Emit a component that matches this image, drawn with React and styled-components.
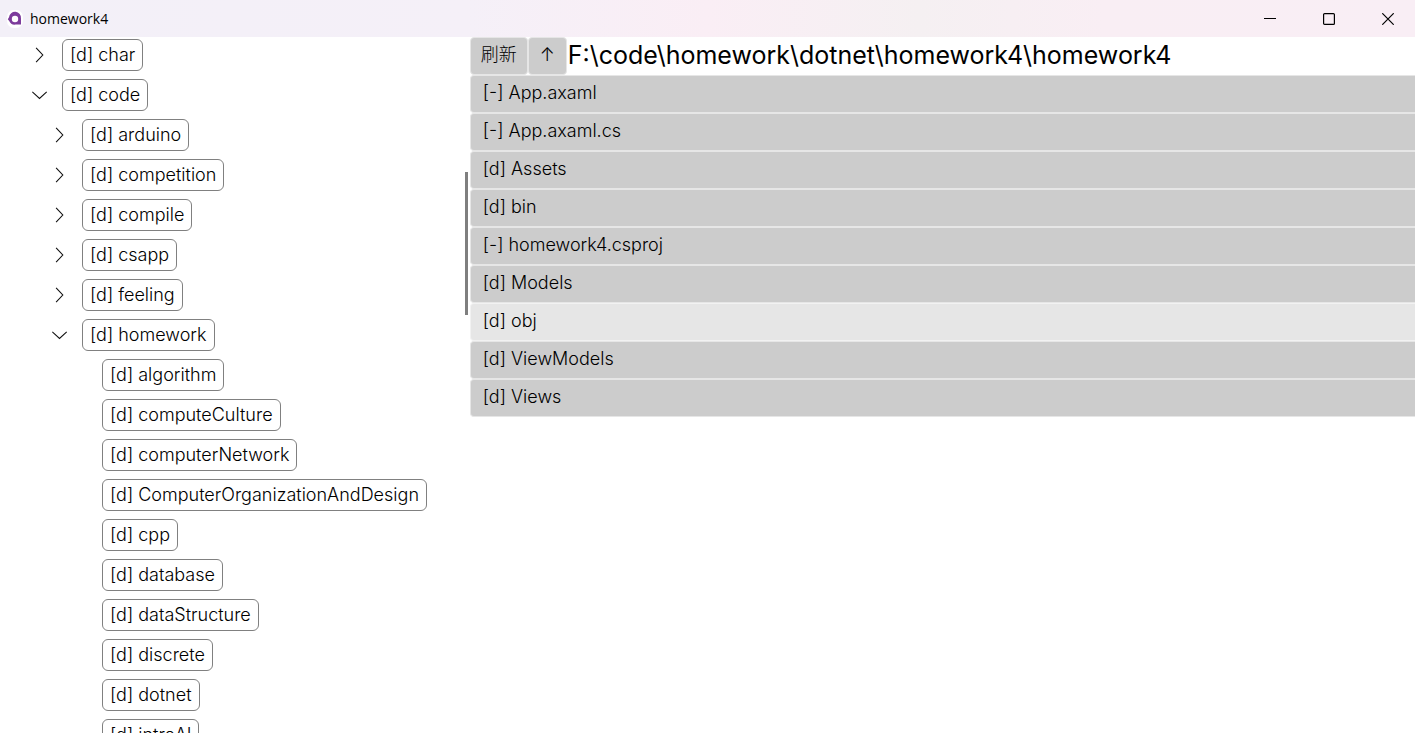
import React from "react";
import styled, { createGlobalStyle } from "styled-components";

const GlobalStyle = createGlobalStyle`
  * { box-sizing: border-box; }
  html, body, #root { height: 100%; }
  body {
    margin: 0;
    overflow: hidden;
    background: #fff;
    color: #000;
    font-family: Inter, "Noto Sans CJK SC", sans-serif;
    font-size: 18px;
    font-weight: 300;
  }
  button { font: inherit; color: inherit; cursor: pointer; }
`;

const Window = styled.div`
  display: flex;
  flex-direction: column;
  height: 100vh;
`;

const TitleBar = styled.header`
  flex: none;
  display: flex;
  align-items: center;
  height: 37px;
  padding-left: 7px;
  background: linear-gradient(90deg, #f3f0f8 0%, #f5f0f8 33%, #faeef5 50%, #f5f0f2 65%, #f9eef4 78%, #f9eef5 100%);
`;

const Title = styled.h1`
  flex: 1;
  margin: 0 0 0 7px;
  font: 400 14px/20px "Open Sans", "Noto Sans", sans-serif;
`;

const CaptionButtons = styled.div`
  display: flex;
  gap: 5px;
`;

const CaptionButton = styled.button`
  display: grid;
  place-items: center;
  width: 54px;
  height: 36px;
  padding: 0;
  border: 0;
  background: transparent;
`;

const Body = styled.main`
  flex: 1;
  min-height: 0;
  display: grid;
  grid-template-columns: 33.2% 1fr;
`;

const TreePane = styled.nav`
  position: relative;
  min-width: 0;
  overflow: hidden;
`;

const TreeList = styled.ul`
  display: flex;
  flex-direction: column;
  gap: 4px;
  margin: 0;
  padding: 0;
  list-style: none;
`;

const TreeRow = styled.div`
  display: flex;
  align-items: center;
  height: 36px;
  padding-left: ${({ $level }) => $level * 20 + 10}px;
`;

const Toggle = styled.button`
  flex: none;
  display: grid;
  place-items: center;
  width: 20px;
  height: 20px;
  margin-right: 12px;
  padding: 0;
  border: 0;
  background: none;
`;

const ToggleGap = styled.span`
  flex: none;
  width: 32px;
`;

const NodeButton = styled.button`
  height: 32px;
  padding: 0 7px;
  border: 1px solid #808080;
  border-radius: 6px;
  background: #fff;
  line-height: 24px;
  white-space: nowrap;
`;

const ScrollThumb = styled.div`
  position: absolute;
  top: 135px;
  right: 2px;
  width: 3px;
  height: 143px;
  background: #7f7f7f;
`;

const FilePane = styled.section`
  min-width: 0;
  overflow: hidden;
`;

const Toolbar = styled.div`
  display: flex;
  align-items: stretch;
  height: 38px;
`;

const ToolButton = styled.button`
  padding: 0 ${({ $pad }) => $pad}px 3px;
  border: 1px solid #e6e6e6;
  border-radius: 4px;
  background: #ccc;
  line-height: 24px;
`;

const Path = styled.output`
  margin-left: 1px;
  font-size: 25px;
  font-weight: 400;
  line-height: 36px;
  white-space: nowrap;
`;

const FileButton = styled.button`
  display: block;
  width: 100%;
  height: 38px;
  padding: 0 12px 2px;
  border: 1px solid ${({ $hover }) => ($hover ? "#f2f2f2" : "#e6e6e6")};
  border-right: 0;
  border-radius: 4px 0 0 4px;
  background: ${({ $hover }) => ($hover ? "#e6e6e6" : "#ccc")};
  line-height: 24px;
  text-align: left;
`;

const FileList = styled.ul`
  margin: 0;
  padding: 0;
  list-style: none;
`;

const tree = [
  [0, "char", "closed"],
  [0, "code", "open"],
  [1, "arduino", "closed"],
  [1, "competition", "closed"],
  [1, "compile", "closed"],
  [1, "csapp", "closed"],
  [1, "feeling", "closed"],
  [1, "homework", "open"],
  [2, "algorithm"],
  [2, "computeCulture"],
  [2, "computerNetwork"],
  [2, "ComputerOrganizationAndDesign"],
  [2, "cpp"],
  [2, "database"],
  [2, "dataStructure"],
  [2, "discrete"],
  [2, "dotnet"],
  [2, "introAI"],
];

const files = [
  "[-] App.axaml",
  "[-] App.axaml.cs",
  "[d] Assets",
  "[d] bin",
  "[-] homework4.csproj",
  "[d] Models",
  "[d] obj",
  "[d] ViewModels",
  "[d] Views",
];

function Chevron({ open }) {
  return (
    <svg width="16" height="16" viewBox="0 0 16 16" fill="none" stroke="#111" strokeWidth="1.1" aria-hidden="true">
      <path d={open ? "M0.3 4.8 7.5 11.4 14.7 4.8" : "M4.1 0.8 10.8 8 4.1 15.2"} />
    </svg>
  );
}

function Logo() {
  return (
    <svg width="16" height="18" viewBox="0 0 16 18" aria-hidden="true">
      <rect width="16" height="18" rx="7" fill="#fff" />
      <path d="M0.8 9.2 2 7.2A6 6 0 0 1 14 8.4V14.6H8.6A6 6 0 0 1 2.2 11Z" fill="#7d3c9c" />
      <circle cx="8" cy="9" r="3.2" fill="#fff" />
    </svg>
  );
}

export default function App() {
  return (
    <Window>
      <GlobalStyle />
      <TitleBar>
        <Logo />
        <Title>homework4</Title>
        <CaptionButtons>
          <CaptionButton aria-label="Minimize">
            <svg width="12" height="12" stroke="#000" aria-hidden="true"><path d="M0 5.5H12" /></svg>
          </CaptionButton>
          <CaptionButton aria-label="Maximize">
            <svg width="12" height="12" fill="none" stroke="#000" aria-hidden="true"><rect x="0.6" y="0.6" width="10.8" height="10.8" rx="1" strokeWidth="1.2" /></svg>
          </CaptionButton>
          <CaptionButton aria-label="Close">
            <svg width="12" height="12" stroke="#000" strokeWidth="1.2" aria-hidden="true"><path d="M0.3 0.3 11.7 11.7M11.7 0.3 0.3 11.7" /></svg>
          </CaptionButton>
        </CaptionButtons>
      </TitleBar>
      <Body>
        <TreePane aria-label="Folders">
          <TreeList>
            {tree.map(([level, name, state]) => (
              <li key={name}>
                <TreeRow $level={level + 1}>
                  {state ? (
                    <Toggle aria-label={name} aria-expanded={state === "open"}>
                      <Chevron open={state === "open"} />
                    </Toggle>
                  ) : (
                    <ToggleGap />
                  )}
                  <NodeButton>[d] {name}</NodeButton>
                </TreeRow>
              </li>
            ))}
          </TreeList>
          <ScrollThumb />
        </TreePane>
        <FilePane aria-label="Files">
          <Toolbar>
            <ToolButton $pad={10}>刷新</ToolButton>
            <ToolButton $pad={11}>↑</ToolButton>
            <Path>F:\code\homework\dotnet\homework4\homework4</Path>
          </Toolbar>
          <FileList>
            {files.map((name) => (
              <li key={name}>
                <FileButton $hover={name === "[d] obj"}>{name}</FileButton>
              </li>
            ))}
          </FileList>
        </FilePane>
      </Body>
    </Window>
  );
}
